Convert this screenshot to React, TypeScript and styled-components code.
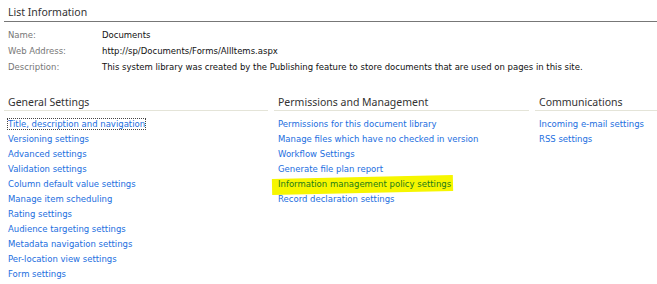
import React from "react";
import styled, { createGlobalStyle } from "styled-components";

const GlobalStyle = createGlobalStyle`
  body {
    margin: 0;
    background: #fff;
    font-family: "DejaVu Sans", Verdana, sans-serif;
  }
`;

const Page = styled.div`
  width: 657px;
  height: 284px;
  overflow: hidden;
  padding-left: 4px;
  box-sizing: border-box;
`;

const TopTitle = styled.div`
  margin-top: 4px;
  padding-left: 4px;
  line-height: 17px;
  font-family: "Noto Sans", "Open Sans", sans-serif;
  font-size: 10.5px;
  color: #333;
  border-bottom: 1px solid #777;
`;

const InfoTable = styled.div`
  padding-top: 5px;
  padding-left: 4px;
`;

const InfoRow = styled.div`
  display: grid;
  grid-template-columns: 94px 1fr;
  height: 16px;
  line-height: 16px;
  font-size: 8.5px;
`;

const Label = styled.span`
  color: #777;
`;

const Value = styled.span`
  color: #111;
`;

const Columns = styled.div`
  display: grid;
  grid-template-columns: 264px 255px 1fr;
  column-gap: 6px;
  margin-top: 19px;
`;

const Section = styled.div`
  display: flex;
  flex-direction: column;
`;

const SectionTitle = styled.div`
  padding-left: 4px;
  line-height: 16px;
  font-family: "Noto Sans", "Open Sans", sans-serif;
  font-size: 10.5px;
  color: #333;
  border-bottom: 1px solid #e4e4d8;
`;

const LinkList = styled.ul`
  list-style: none;
  margin: 0;
  padding: 6px 0 0 4px;
`;

const Item = styled.li`
  height: 15px;
  line-height: 15px;
  font-size: 8.5px;
`;

const Link = styled.a<{ $focused?: boolean; $marked?: boolean }>`
  position: relative;
  color: #1b6ee0;
  text-decoration: none;
  outline: ${(p) => (p.$focused ? "1px dotted #444" : "none")};
  outline-offset: 0;
  ${(p) =>
    p.$marked &&
    `
    &::before {
      content: "";
      position: absolute;
      left: -6px;
      right: -2px;
      top: -2px;
      bottom: -4px;
      background: #f6f600;
      transform: rotate(-1.2deg);
      z-index: -1;
    }
    color: #1c7b1a;
  `}
`;

const Marked = styled.span`
  position: relative;
  z-index: 0;
  display: inline-block;
`;

const general = [
  "Title, description and navigation",
  "Versioning settings",
  "Advanced settings",
  "Validation settings",
  "Column default value settings",
  "Manage item scheduling",
  "Rating settings",
  "Audience targeting settings",
  "Metadata navigation settings",
  "Per-location view settings",
  "Form settings",
];

const permissions = [
  "Permissions for this document library",
  "Manage files which have no checked in version",
  "Workflow Settings",
  "Generate file plan report",
  "Information management policy settings",
  "Record declaration settings",
];

const communications = ["Incoming e-mail settings", "RSS settings"];

export default function App() {
  return (
    <Page>
      <GlobalStyle />
      <TopTitle>List Information</TopTitle>
      <InfoTable>
        <InfoRow>
          <Label>Name:</Label>
          <Value>Documents</Value>
        </InfoRow>
        <InfoRow>
          <Label>Web Address:</Label>
          <Value>http://sp/Documents/Forms/AllItems.aspx</Value>
        </InfoRow>
        <InfoRow>
          <Label>Description:</Label>
          <Value>
            This system library was created by the Publishing feature to store
            documents that are used on pages in this site.
          </Value>
        </InfoRow>
      </InfoTable>
      <Columns>
        <Section>
          <SectionTitle>General Settings</SectionTitle>
          <LinkList>
            {general.map((t, i) => (
              <Item key={t}>
                <Link href="#" $focused={i === 0}>
                  {t}
                </Link>
              </Item>
            ))}
          </LinkList>
        </Section>
        <Section>
          <SectionTitle>Permissions and Management</SectionTitle>
          <LinkList>
            {permissions.map((t, i) =>
              i === 4 ? (
                <Item key={t}>
                  <Marked>
                    <Link href="#" $marked>
                      {t}
                    </Link>
                  </Marked>
                </Item>
              ) : (
                <Item key={t}>
                  <Link href="#">{t}</Link>
                </Item>
              )
            )}
          </LinkList>
        </Section>
        <Section>
          <SectionTitle>Communications</SectionTitle>
          <LinkList>
            {communications.map((t) => (
              <Item key={t}>
                <Link href="#">{t}</Link>
              </Item>
            ))}
          </LinkList>
        </Section>
      </Columns>
    </Page>
  );
}
